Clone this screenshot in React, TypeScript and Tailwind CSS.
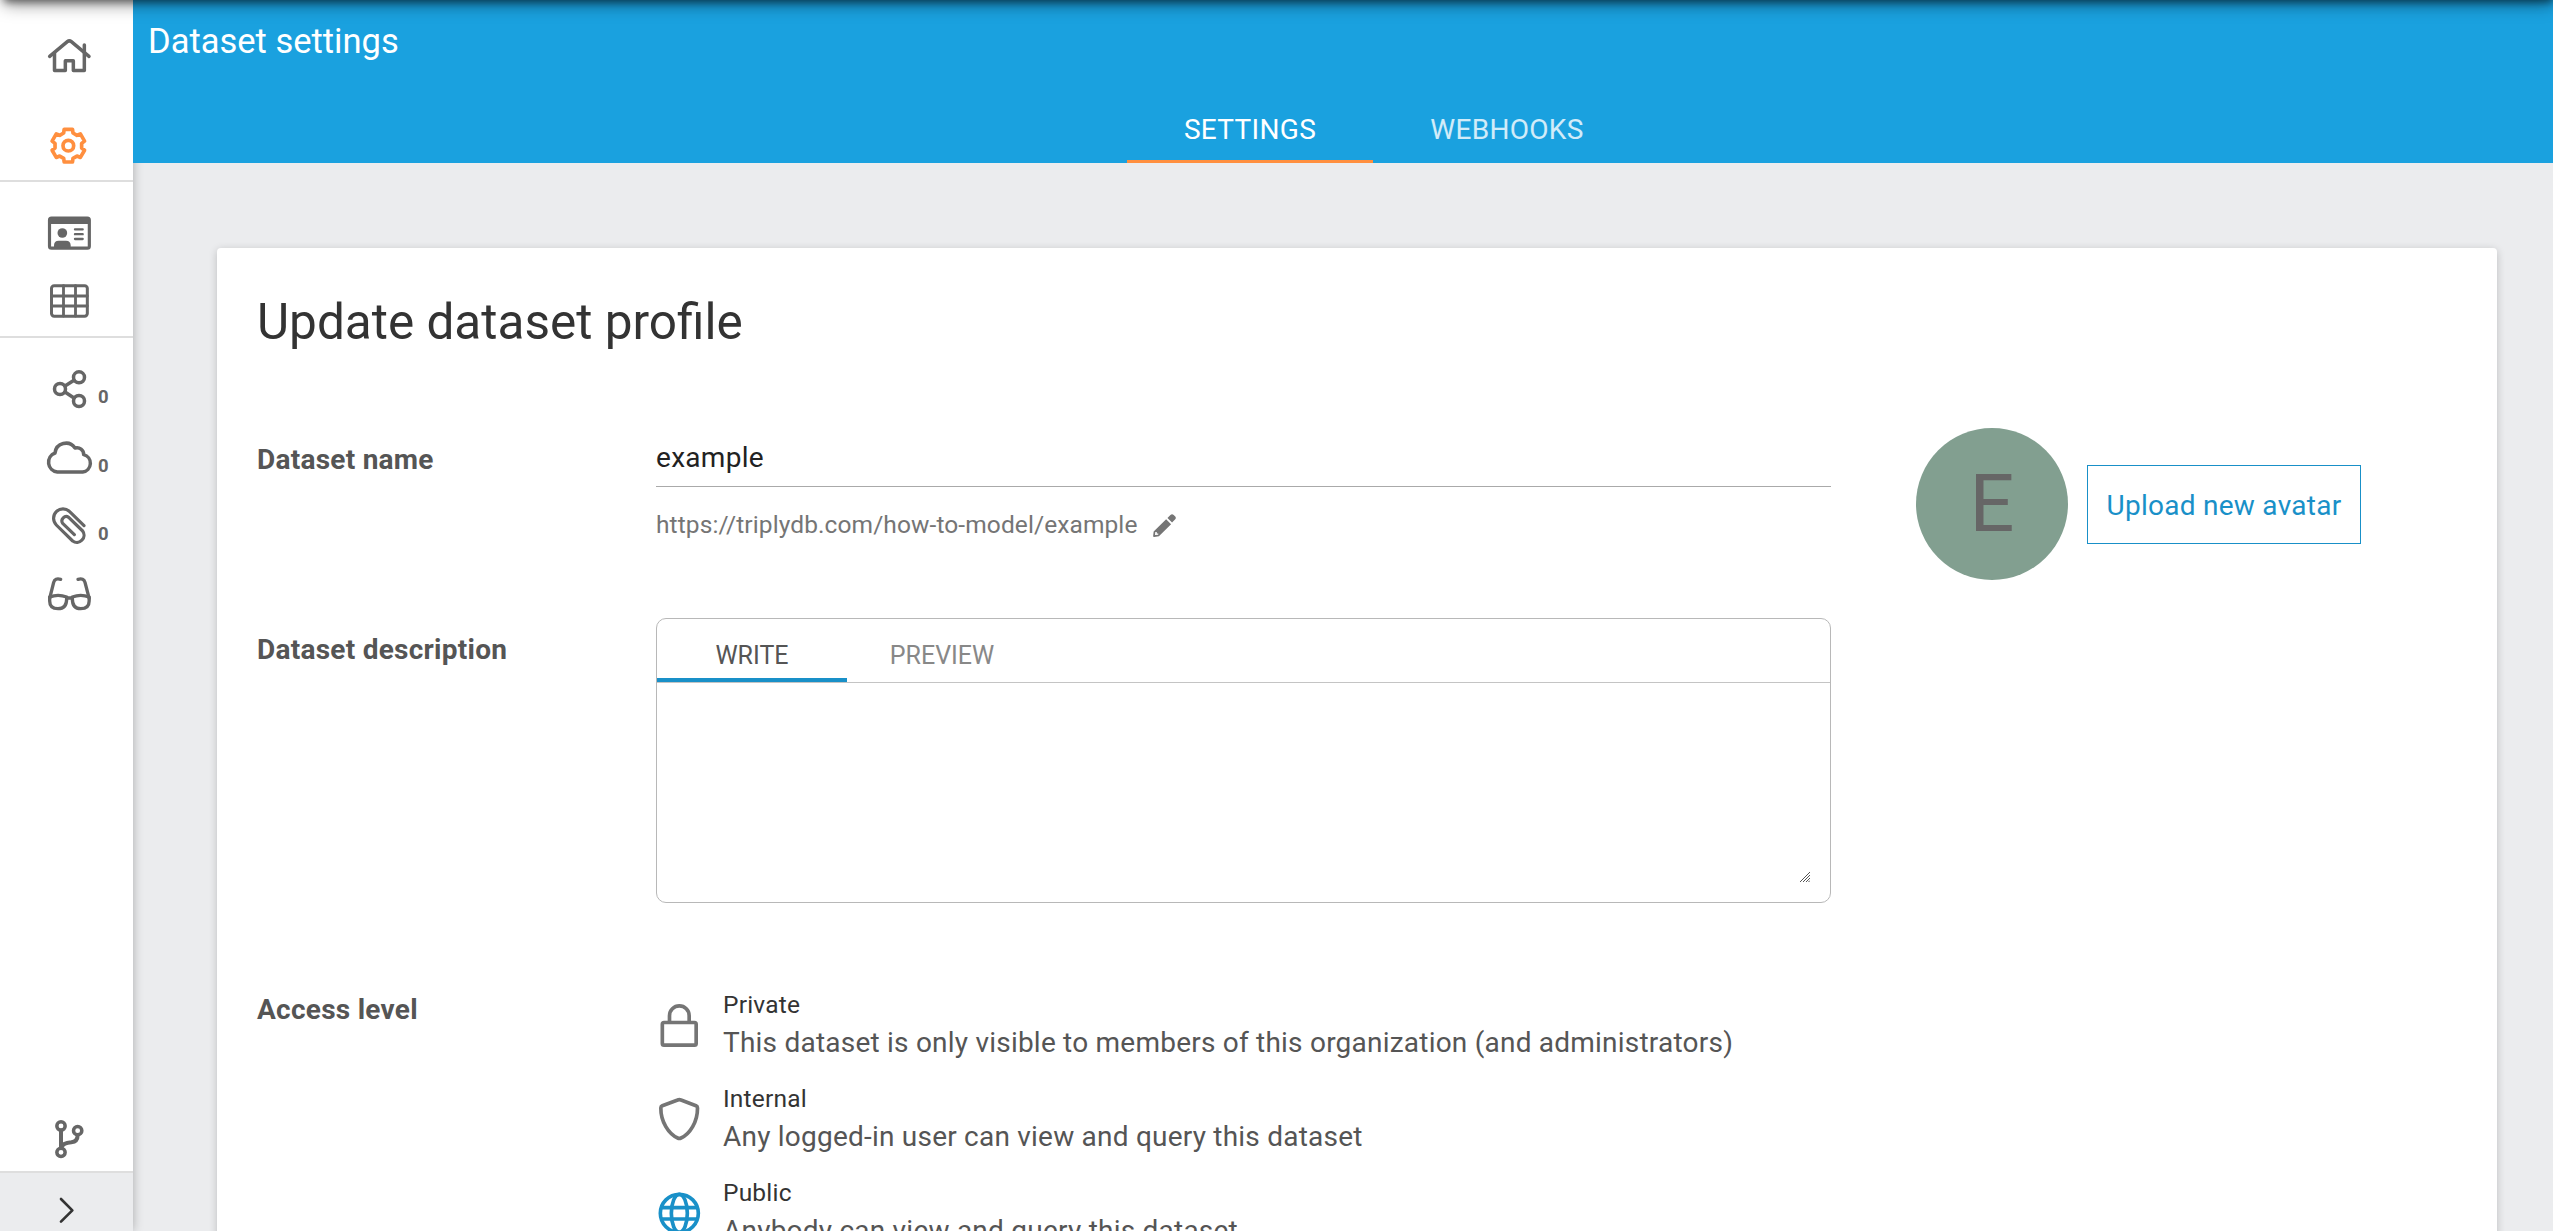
import type { ReactNode } from "react";

const point = (x: number, y: number, deg: number) => {
  const a = (deg * Math.PI) / 180;
  return `${(x * Math.cos(a) - y * Math.sin(a)).toFixed(2)} ${(x * Math.sin(a) + y * Math.cos(a)).toFixed(2)}`;
};

// Six-toothed gear outline around the origin
const gearPath =
  "M" +
  [0, 60, 120, 180, 240, 300]
    .map((d) =>
      [
        [-14, -38],
        [-12.5, -49],
        [12.5, -49],
        [14, -38],
      ]
        .map(([x, y]) => point(x, y, d))
        .join(" L"),
    )
    .join(" L") +
  " Z";

function NavItem({
  box,
  className,
  badge,
  badgeClass = "",
  stroke = 10.5,
  children,
}: {
  box: string;
  className: string;
  badge?: string;
  badgeClass?: string;
  stroke?: number;
  children: ReactNode;
}) {
  return (
    <a className={`flex shrink-0 items-center text-[#666] ${className}`}>
      <svg
        viewBox={box}
        className="h-full w-[98px] shrink-0"
        fill="none"
        stroke="currentColor"
        strokeWidth={stroke}
        strokeLinecap="round"
        strokeLinejoin="round"
      >
        {children}
      </svg>
      {badge && <span className={`text-[18.5px] leading-[18px] font-bold ${badgeClass}`}>{badge}</span>}
    </a>
  );
}

function Pencil({ className }: { className?: string }) {
  return (
    <svg viewBox="39 38 70 70" className={className} fill="currentColor">
      <path d="M79 54 L94 69 L57 106 L43 108 Q39 108.500 39.500 104 L41 91 Z M46 93 L45 102 L55 101.500 V97 H50.500 V93 Z" fillRule="evenodd" />
      <path d="M83 50 L92 41 Q97 36 102 41 L106 45 Q111 50 106 55 L97 64 Z" />
    </svg>
  );
}

function Sidebar() {
  return (
    <nav className="flex w-[133px] shrink-0 flex-col bg-white shadow-[0_0_10px_rgba(0,0,0,0.28)]">
      <div className="border-b-2 border-[#dedede]">
        <NavItem box="0 0 294 300" className="h-[100px]">
          <path d="M149 169 L202 125 Q208 120 214 125 L267 169" />
          <path d="M163.500 160 V211.500 H196 V182 H220 V211.500 H253 V160" />
          <path d="M253 135 V154" />
        </NavItem>
        <NavItem box="0 300 294 240" className="h-20 text-[#ff8f3f]!" stroke={11}>
          <g transform="translate(205 437)">
            <path d={gearPath} />
            <circle r="16" />
          </g>
        </NavItem>
      </div>
      <div className="border-b-2 border-[#dedede]">
        <NavItem box="0 546 294 258" className="h-[86px]" stroke={9.5}>
          <rect x="148.500" y="654" width="119.500" height="90.500" rx="6" />
          <path d="M149 655 H268 V670 H149 Z" fill="currentColor" strokeWidth="4" />
          <circle cx="187" cy="699" r="14.500" fill="currentColor" stroke="none" />
          <path d="M162 742 V736 Q162 722 176 722 H198 Q212 722 212 736 V742 Z" fill="currentColor" stroke="none" />
          <path d="M225 688 H248 M225 702.500 H248 M225 717 H248" strokeWidth="7" />
        </NavItem>
        <NavItem box="0 804 294 204" className="h-[68px]" stroke={9}>
          <rect x="154.500" y="857" width="107.500" height="91.500" rx="8" />
          <path d="M190.500 857 V948 M226.500 857 V948 M155 888 H262 M155 918 H262" strokeWidth="8.500" />
        </NavItem>
      </div>
      <NavItem box="0 24 294 258" className="h-[86px]" badge="0" badgeClass="mt-[31px]">
        <circle cx="180" cy="177" r="16.500" />
        <circle cx="237" cy="142" r="16.500" />
        <circle cx="237" cy="213" r="16.500" />
        <path d="M195 168 L222 151 M195 186 L222 204" />
      </NavItem>
      <NavItem box="0 282 294 204" className="h-[68px]" badge="0" badgeClass="mt-[15px]">
        <path d="M172 426 H248 A26.500 26.500 0 0 0 251 374 A20 20 0 0 0 225 354 A33 33 0 0 0 165 369 A29.500 29.500 0 0 0 172 426 Z" />
      </NavItem>
      <NavItem box="0 486 294 204" className="h-[68px]" badge="0" badgeClass="mt-[15px]" stroke={9.5}>
        <path d="M252 587 L209 545 A28 28 0 0 0 169 585 L218 633 A21.500 21.500 0 0 0 248 603 L206 562 A13 13 0 0 0 188 580 L223 614" />
      </NavItem>
      <NavItem box="0 690 294 210" className="h-[70px]" stroke={10}>
        <path d="M182 748 Q165 743 161 757 L149 805 M234 748 Q251 743 255 757 L267.500 805" />
        <path d="M149 801 Q174 791 200 801 V806 Q200 836 174 836 Q149 836 149 813 Z" />
        <path d="M267.500 801 Q242 791 217 801 V806 Q217 836 242 836 Q267.500 836 267.500 813 Z" />
        <path d="M200 804 H217" />
      </NavItem>
      <div className="grow" />
      <NavItem box="0 75 294 198" className="h-[66px]">
        <circle cx="183" cy="138" r="12.500" />
        <circle cx="183" cy="217" r="12.500" />
        <circle cx="233" cy="152" r="12.500" />
        <path d="M183 151 V204 M233 165 Q233 185 214 187 Q188 189 184 203" strokeWidth="12" />
      </NavItem>
      <div className="border-t-2 border-[#dedede] bg-[#ebecee]">
        <NavItem box="0 279 294 174" className="h-[58px] text-[#333]!" stroke={8}>
          <path d="M183 357 L217 391 L183 425" />
        </NavItem>
      </div>
    </nav>
  );
}

function Row({ label, className, children }: { label: string; className?: string; children: ReactNode }) {
  return (
    <div className={`flex items-start ${className ?? ""}`}>
      <div className="mt-3 w-[399px] shrink-0 text-[28px] leading-10 font-bold tracking-[0.26px] text-[#555]">
        {label}
      </div>
      {children}
    </div>
  );
}

function AccessOption({ title, text, box, icon }: { title: string; text: string; box: string; icon: ReactNode }) {
  return (
    <div className="flex h-[94px] items-start">
      <svg
        viewBox={box}
        className="mr-[17px] h-[60px] w-[50px] shrink-0"
        fill="none"
        stroke="#757575"
        strokeWidth="11"
        strokeLinejoin="round"
      >
        {icon}
      </svg>
      <div>
        <div className="text-[24.5px] leading-9 tracking-[0.2px] text-[#333]">{title}</div>
        <div className="text-[28px] leading-10 tracking-[0.22px] text-[#555]">{text}</div>
      </div>
    </div>
  );
}

export default function App() {
  return (
    <div className="relative flex h-[1231px] w-[2553px] overflow-hidden bg-[#ebecee] font-['Roboto',sans-serif]">
      <Sidebar />
      <div className="relative flex min-w-0 grow flex-col">
        <header className="relative flex h-[163px] shrink-0 flex-col justify-between bg-[#1aa1df] text-white">
          <h1 className="mt-[21px] ml-[15px] text-[34.5px] leading-10">Dataset settings</h1>
          <div className="ml-[994px] flex h-[67px] text-[28px] leading-[67px] tracking-[0.3px]">
            <div className="w-[246px] border-b-3 border-[#ff8f3f] text-center">SETTINGS</div>
            <div className="w-[268px] text-center text-white/80">WEBHOOKS</div>
          </div>
        </header>
        <main className="min-h-0 grow overflow-hidden pt-[85px] pr-14 pl-[84px]">
          <section className="h-[1100px] rounded bg-white px-10 pt-11 shadow-[0_2px_8px_rgba(0,0,0,0.2)]">
            <h2 className="text-[49.5px] leading-[60px] text-[#333]">Update dataset profile</h2>

            <Row label="Dataset name" className="mt-[76px] h-[190px]">
              <div className="w-[1175px] shrink-0">
                <div className="h-[59px] border-b border-[#aaa] text-[28px] leading-[59px] tracking-[0.3px] text-[#222]">
                  example
                </div>
                <div className="mt-[18px] flex items-center text-[24.5px] leading-10 tracking-[0.1px] text-[#757575]">
                  https://triplydb.com/how-to-model/example
                  <Pencil className="ml-[15px] size-[23px]" />
                </div>
              </div>
              <div className="ml-[85px] flex size-[152px] shrink-0 items-center justify-center rounded-full bg-[#829f90] text-[79px] leading-[79px] text-[#666]">
                E
              </div>
              <button className="mt-[37px] ml-[19px] h-[79px] w-[274px] border border-[#1990c8] pt-0.5 text-[28px] tracking-[0.26px] text-[#1990c8]">
                Upload new avatar
              </button>
            </Row>

            <Row label="Dataset description" className="h-[360px]">
              <div className="relative h-[285px] w-[1175px] shrink-0 rounded-[10px] border border-[#b8b8b8]">
                <div className="flex h-16 border-b border-[#c4c4c4] text-[25px] leading-[73px]">
                  <div className="h-[63px] w-[190px] border-b-4 border-[#1990c8] text-center text-[#555]">WRITE</div>
                  <div className="h-[63px] w-[190px] text-center text-[#888]">PREVIEW</div>
                </div>
                <svg viewBox="0 0 10 10" className="absolute right-5 bottom-5 size-2.5" stroke="#555" strokeWidth="1">
                  <path d="M0 10 L10 0 M3 10 L10 3 M6 10 L10 6 M8.500 10 L10 8.500" />
                </svg>
              </div>
            </Row>

            <Row label="Access level">
              <div className="mt-[9px]">
                <AccessOption
                  title="Private"
                  text="This dataset is only visible to members of this organization (and administrators)"
                  box="48 21 150 180"
                  icon={
                    <>
                      <rect x="67" y="127.500" width="101.500" height="68" rx="5" />
                      <path d="M88.500 127 V107 A29.500 29.500 0 0 1 147.500 107 V127" />
                    </>
                  }
                />
                <AccessOption
                  title="Internal"
                  text="Any logged-in user can view and query this dataset"
                  box="48 303 150 180"
                  icon={
                    <path d="M113 360 Q118 357.500 123 360 L168 377 Q172.500 379 172.500 384 C173 425 150 462 123 474 Q118 476.500 113 474 C86 462 62 425 62.500 384 Q62.500 379 67 377 Z" />
                  }
                />
                <AccessOption
                  title="Public"
                  text="Anybody can view and query this dataset"
                  box="48 585 150 180"
                  icon={
                    <g stroke="#1990c8">
                      <circle cx="118" cy="700" r="57" />
                      <ellipse cx="118" cy="700" rx="24" ry="57" />
                      <path d="M64 683 H172 M64 717 H172" />
                    </g>
                  }
                />
              </div>
            </Row>
          </section>
        </main>
      </div>
      {/* Shadow cast by the app bar above the fold */}
      <div className="pointer-events-none absolute -top-10 right-0 left-1 h-10 shadow-[0_2px_8px_rgba(0,0,0,0.5),0_4px_18px_rgba(0,0,0,0.4)]" />
    </div>
  );
}
